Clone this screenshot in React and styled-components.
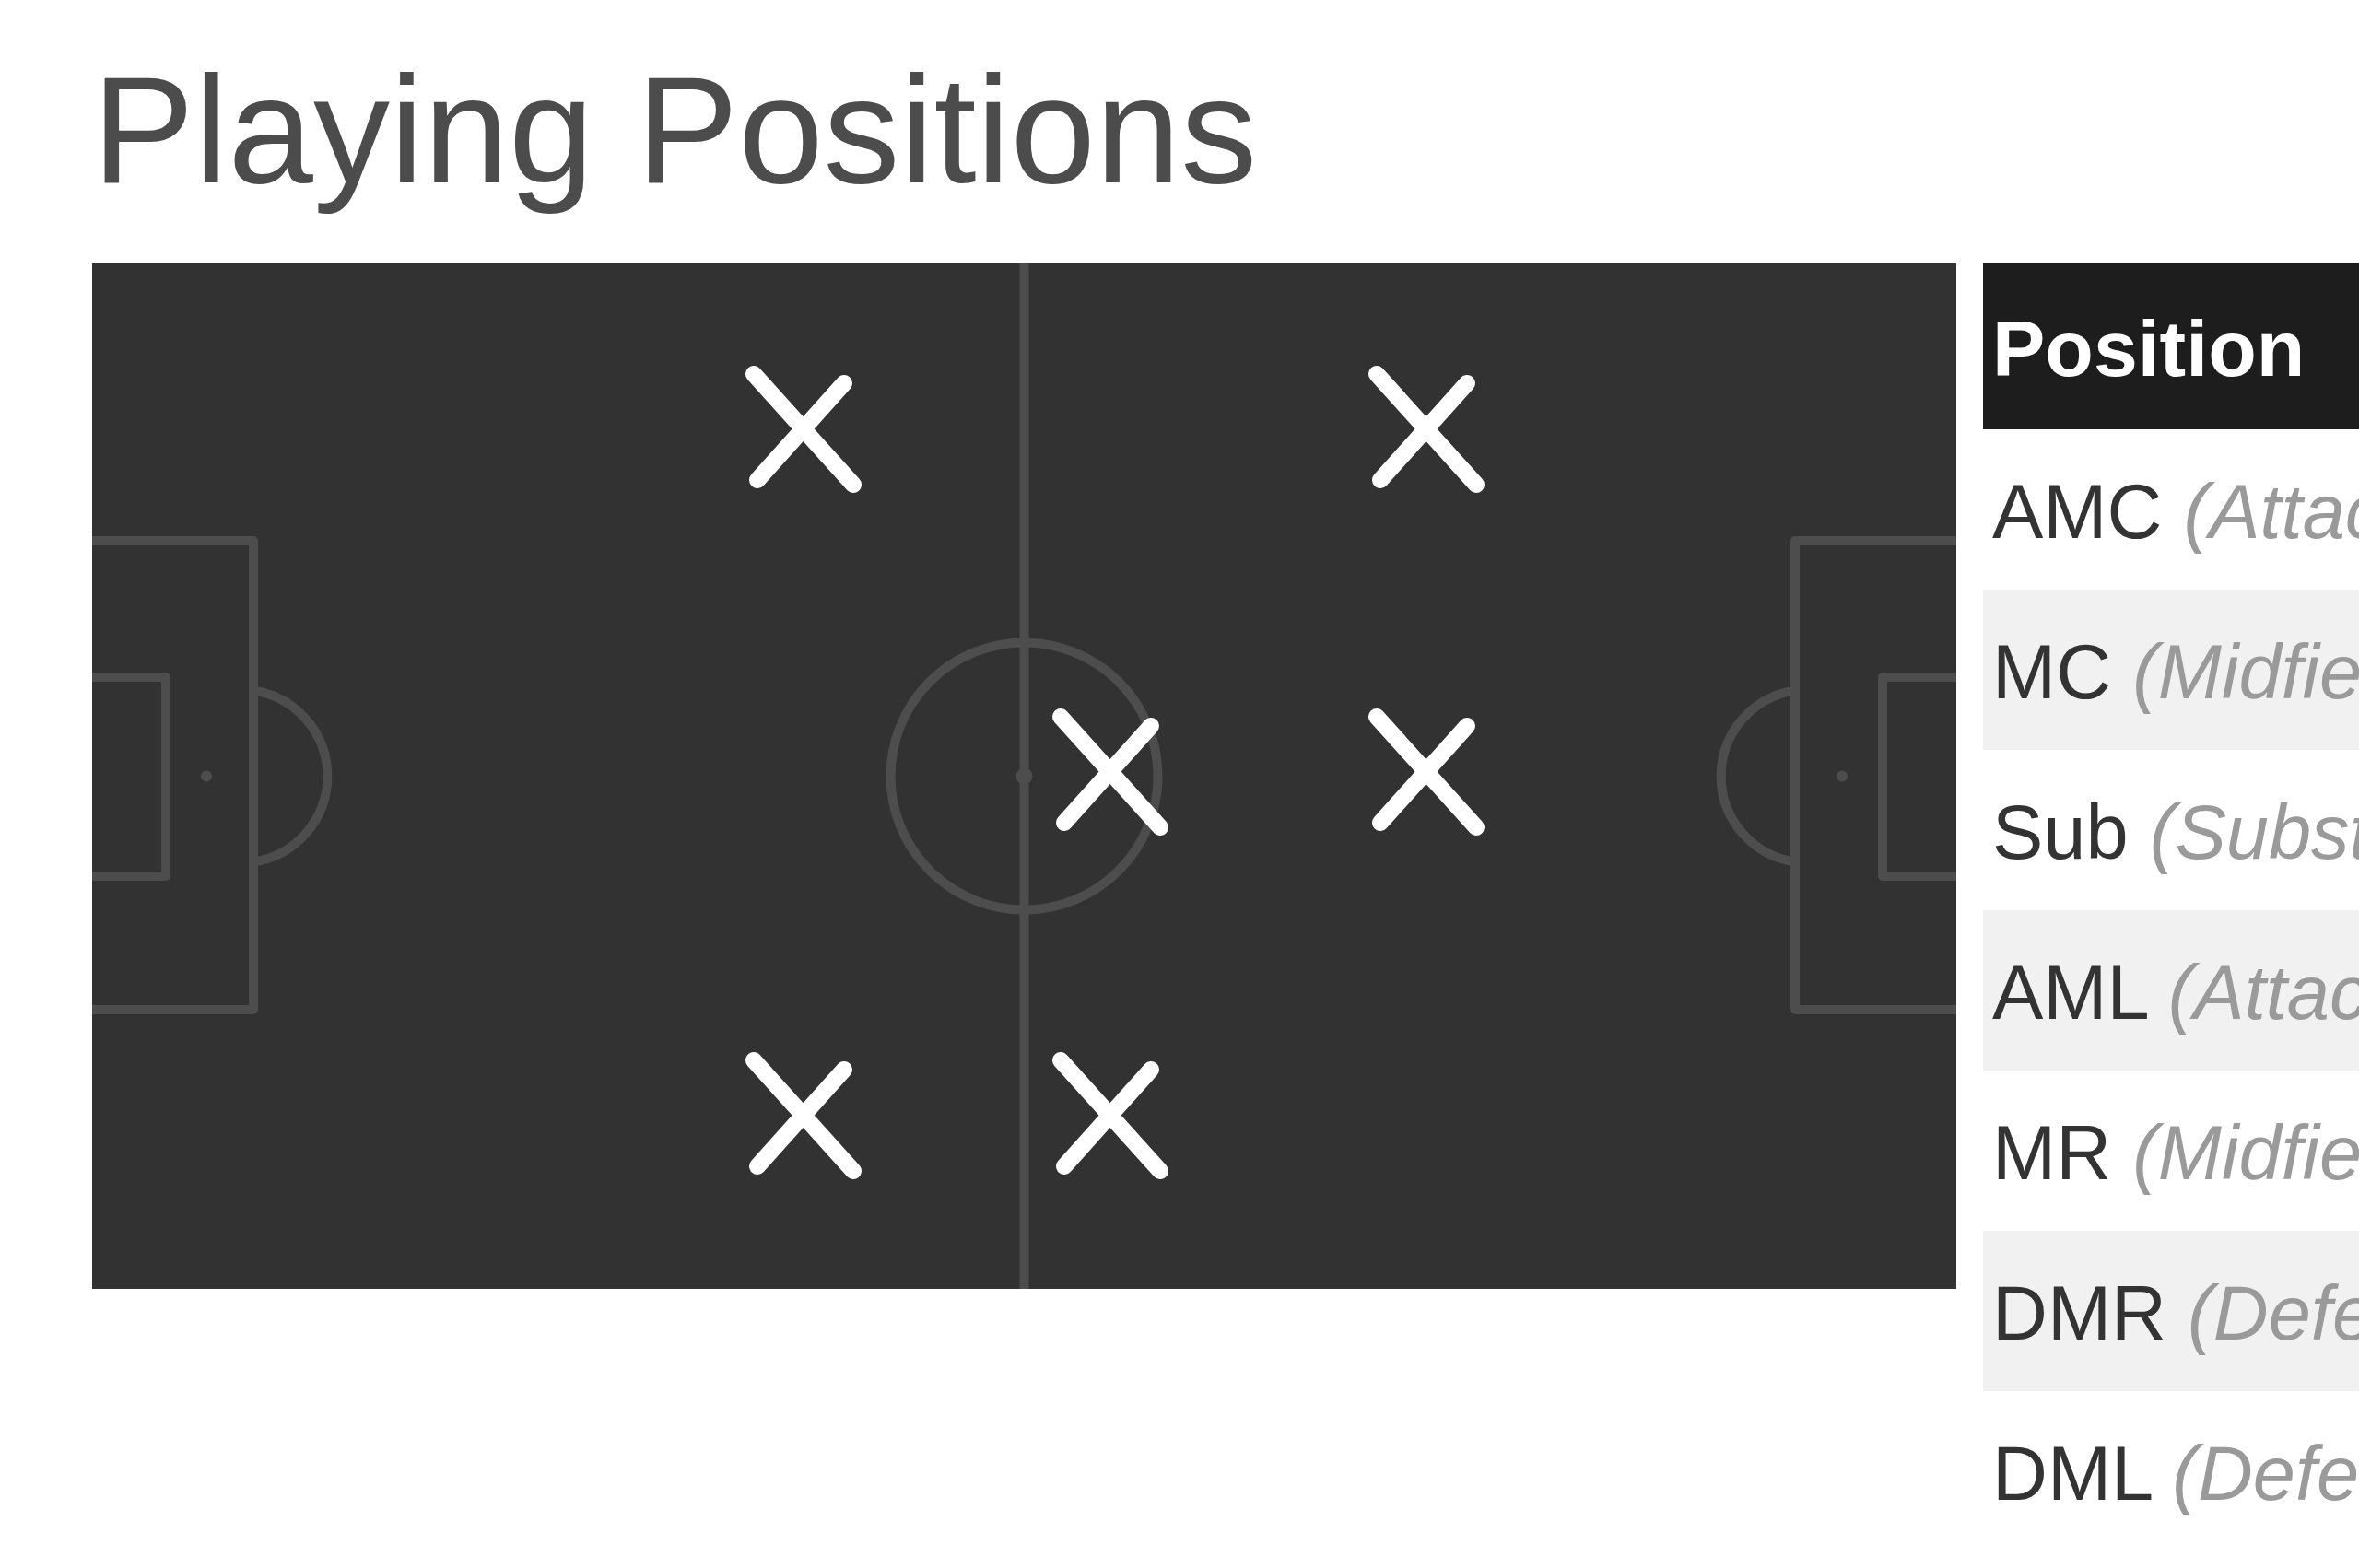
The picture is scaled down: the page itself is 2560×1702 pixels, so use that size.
import React from "react";
import styled, { createGlobalStyle } from "styled-components";

const GlobalStyle = createGlobalStyle`
  html, body {
    margin: 0;
    padding: 0;
    background: #ffffff;
    overflow: hidden;
  }
  body {
    font-family: "Liberation Sans", Arial, sans-serif;
  }
`;

const Page = styled.main`
  padding: 57px 0 0 100px;
  width: 2560px;
  height: 1702px;
  box-sizing: border-box;
`;

const Title = styled.h1`
  margin: 0 0 61px 0;
  font-family: "Liberation Sans", Arial, sans-serif;
  font-weight: 400;
  font-size: 166px;
  line-height: 168px;
  color: #4c4c4c;
  white-space: nowrap;
`;

const Content = styled.section`
  display: flex;
  align-items: flex-start;
  gap: 29px;
`;

const Pitch = styled.div`
  flex: none;
  width: 2023px;
  height: 1113px;
  background: #323232;
  svg {
    display: block;
  }
`;

const Table = styled.table`
  flex: none;
  border-collapse: collapse;
  width: 1200px;
  font-family: "Liberation Sans", Arial, sans-serif;
`;

const HeadRow = styled.tr`
  height: 180px;
`;

const HeadCell = styled.th`
  padding: 4px 10px 0;
  background: #1d1d1d;
  color: #ffffff;
  font-weight: 700;
  font-size: 86px;
  text-align: left;
  vertical-align: middle;
  white-space: nowrap;
`;

const Row = styled.tr`
  height: 174px;
  background: ${(p) => (p.$shaded ? "#f1f1f1" : "#ffffff")};
`;

const Cell = styled.td`
  padding: 5px 10px 0;
  vertical-align: middle;
  white-space: nowrap;
  font-size: 83px;
  color: #333333;
`;

const Detail = styled.span`
  font-style: italic;
  color: #9a9a9a;
`;

const W = 2023;
const H = 1113;
const CY = H / 2;
const LINE = "#4d4d4d";

const positions = [
  ["AMC", "Attacking Midfielder Centre"],
  ["MC", "Midfielder Centre"],
  ["Sub", "Substitute"],
  ["AML", "Attacking Midfielder Left"],
  ["MR", "Midfielder Right"],
  ["DMR", "Defensive Midfielder Right"],
  ["DML", "Defensive Midfielder Left"],
];

// player markers, in pitch coordinates
const markers = [
  [772, 180],
  [1448, 180],
  [1105, 552],
  [1448, 552],
  [772, 925],
  [1105, 925],
];

function PenaltyArea({ mirror }) {
  return (
    <g transform={mirror ? `translate(${W} 0) scale(-1 1)` : undefined}>
      <path d={`M 0 301 H 175 V 810 H 0`} />
      <path d={`M 0 449 H 80 V 665 H 0`} />
      <path d={`M 175 ${CY - 93} A 94 94 0 0 1 175 ${CY + 93}`} />
      <circle cx={124} cy={CY} r={6} fill={LINE} stroke="none" />
    </g>
  );
}

function Marker({ x, y }) {
  return (
    <g transform={`translate(${x} ${y})`}>
      <line x1={-54} y1={-60} x2={54} y2={60} />
      <line x1={44} y1={-50} x2={-50} y2={55} />
    </g>
  );
}

function PitchDrawing() {
  return (
    <svg width={W} height={H} viewBox={`0 0 ${W} ${H}`}>
      <g fill="none" stroke={LINE} strokeWidth={10} strokeLinejoin="round">
        <line x1={W / 2} y1={0} x2={W / 2} y2={H} />
        <circle cx={W / 2} cy={CY} r={145} />
        <circle cx={W / 2} cy={CY} r={9} fill={LINE} stroke="none" />
        <PenaltyArea />
        <PenaltyArea mirror />
      </g>
      <g stroke="#ffffff" strokeWidth={18} strokeLinecap="round">
        {markers.map(([x, y], i) => (
          <Marker key={i} x={x} y={y} />
        ))}
      </g>
    </svg>
  );
}

export default function App() {
  return (
    <>
      <GlobalStyle />
      <Page>
        <Title>Playing Positions</Title>
        <Content>
          <Pitch>
            <PitchDrawing />
          </Pitch>
          <Table>
            <thead>
              <HeadRow>
                <HeadCell>Position</HeadCell>
              </HeadRow>
            </thead>
            <tbody>
              {positions.map(([code, name], i) => (
                <Row key={code} $shaded={i % 2 === 1}>
                  <Cell>
                    {code} <Detail>({name})</Detail>
                  </Cell>
                </Row>
              ))}
            </tbody>
          </Table>
        </Content>
      </Page>
    </>
  );
}
